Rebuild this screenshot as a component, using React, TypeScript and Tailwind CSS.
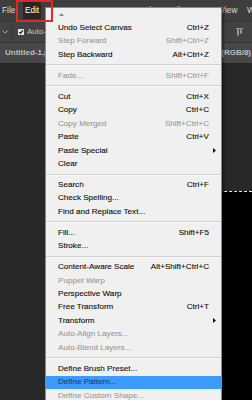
import React from "react";

type Item = {
  label: string;
  shortcut?: string;
  disabled?: boolean;
  submenu?: boolean;
  active?: boolean;
};

type Entry = Item | "sep";

const entries: Entry[] = [
  { label: "Undo Select Canvas", shortcut: "Ctrl+Z" },
  { label: "Step Forward", shortcut: "Shift+Ctrl+Z", disabled: true },
  { label: "Step Backward", shortcut: "Alt+Ctrl+Z" },
  "sep",
  { label: "Fade...", shortcut: "Shift+Ctrl+F", disabled: true },
  "sep",
  { label: "Cut", shortcut: "Ctrl+X" },
  { label: "Copy", shortcut: "Ctrl+C" },
  { label: "Copy Merged", shortcut: "Shift+Ctrl+C", disabled: true },
  { label: "Paste", shortcut: "Ctrl+V" },
  { label: "Paste Special", submenu: true },
  { label: "Clear" },
  "sep",
  { label: "Search", shortcut: "Ctrl+F" },
  { label: "Check Spelling..." },
  { label: "Find and Replace Text..." },
  "sep",
  { label: "Fill...", shortcut: "Shift+F5" },
  { label: "Stroke..." },
  "sep",
  { label: "Content-Aware Scale", shortcut: "Alt+Shift+Ctrl+C" },
  { label: "Puppet Warp", disabled: true },
  { label: "Perspective Warp" },
  { label: "Free Transform", shortcut: "Ctrl+T" },
  { label: "Transform", submenu: true },
  { label: "Auto-Align Layers...", disabled: true },
  { label: "Auto-Blend Layers...", disabled: true },
  "sep",
  { label: "Define Brush Preset..." },
  { label: "Define Pattern...", active: true },
  { label: "Define Custom Shape...", disabled: true },
];

const menubar = ["File", "Edit", "Image", "Layer", "Type", "Select", "Filter", "3D", "View", "Window", "Help"];

function MenuRow({ item }: { item: Item }) {
  const color = item.active ? "text-[#1d3f70]" : item.disabled ? "text-[#9b9b9b]" : "text-[#111]";
  return (
    <div
      className={`relative flex h-[13.4px] items-center justify-between pl-[12px] pr-[12px] ${color} ${
        item.active ? "bg-[#3d9bff]" : ""
      }`}
    >
      <span>{item.label}</span>
      {item.shortcut && <span>{item.shortcut}</span>}
      {item.submenu && (
        <svg className="absolute right-[5px] top-[4px]" width="3" height="5" viewBox="0 0 3 5">
          <path d="M0 0 L3 2.5 L0 5 Z" fill="#111" />
        </svg>
      )}
    </div>
  );
}

export default function App() {
  return (
    <div
      className="relative flex h-[400px] w-[252px] flex-col overflow-hidden bg-[#282828]"
      style={{ fontFamily: '"Liberation Sans", Arial, sans-serif' }}
    >
      {/* menu bar */}
      <div className="flex h-[21px] shrink-0 items-start gap-[5.5px] bg-[#3e3e3e] pt-[2px] text-[8.3px] text-[#dcdcdc]">
        {menubar.map((m) => (
          <span
            key={m}
            className={`whitespace-nowrap px-[2px] py-[2px] leading-[13px] ${m === "Edit" ? "bg-[#262626] text-white" : ""}`}
          >
            {m}
          </span>
        ))}
      </div>

      {/* options bar */}
      <div className="flex h-[21px] shrink-0 items-center border-t border-[#363636] bg-[#424242] pl-[2px] pr-[9px] text-[8px] text-[#c8c8c8]">
        <svg width="6" height="4" viewBox="0 0 6 4">
          <path d="M0.5 0.5 L3 3 L5.5 0.5" stroke="#a8a8a8" strokeWidth="1" fill="none" />
        </svg>
        <div className="ml-[4px] h-[14px] w-px bg-[#353535]" />
        <svg className="ml-[5px]" width="6" height="6" viewBox="0 0 6 6">
          <rect x="0" y="0" width="6" height="6" fill="#e6e6e6" />
          <path d="M1.2 3 L2.5 4.4 L4.9 1.4" stroke="#111" strokeWidth="1.1" fill="none" />
        </svg>
        <span className="ml-[3px]">Auto-Select:</span>
        <svg className="ml-auto" width="7" height="8" viewBox="0 0 7 8">
          <rect x="0" y="0" width="7" height="1.2" fill="#9a9a9a" />
          <rect x="1" y="1.5" width="2" height="6" fill="#9a9a9a" />
          <rect x="4" y="1.5" width="2" height="4" fill="#9a9a9a" />
        </svg>
      </div>

      {/* document tab */}
      <div className="flex h-[21px] shrink-0 items-center border-t border-[#333] bg-[#474747] pl-[5px] pr-[1px] text-[8px] font-bold text-[#bdbdbd]">
        <span>Untitled-1.psd @ 66.7%</span>
        <span className="ml-auto">(RGB/8)</span>
      </div>

      {/* workspace */}
      <div className="flex flex-1 flex-col pl-[140px] pt-[128px]">
        <div className="flex-1 border-t border-dashed border-[#e8e8e8] bg-black" />
      </div>

      {/* Edit dropdown */}
      <div className="absolute left-[45px] top-[7px] z-10 w-[177px] border border-[#8a8a8a] bg-[#f0f0f0] text-[8.1px] shadow-[2px_2px_2px_rgba(0,0,0,0.4)] [-webkit-text-stroke:0.12px_currentColor]">
        <div className="flex h-[13.4px] items-center pl-[13px]">
          <svg width="5" height="3" viewBox="0 0 5 3">
            <path d="M0 3 L2.5 0 L5 3 Z" fill="#8c8c8c" />
          </svg>
        </div>
        {entries.map((e, i) =>
          e === "sep" ? (
            <div key={i} className="flex h-[7.7px] flex-col justify-center">
              <div className="h-px w-full bg-[#cfcfcf]" />
              <div className="h-px w-full bg-[#fafafa]" />
            </div>
          ) : (
            <MenuRow key={i} item={e} />
          )
        )}
      </div>

      {/* red annotation box */}
      <div className="absolute left-[16px] top-0 z-20 h-[22px] w-[37px] border-2 border-[#e3262a]" />
    </div>
  );
}
